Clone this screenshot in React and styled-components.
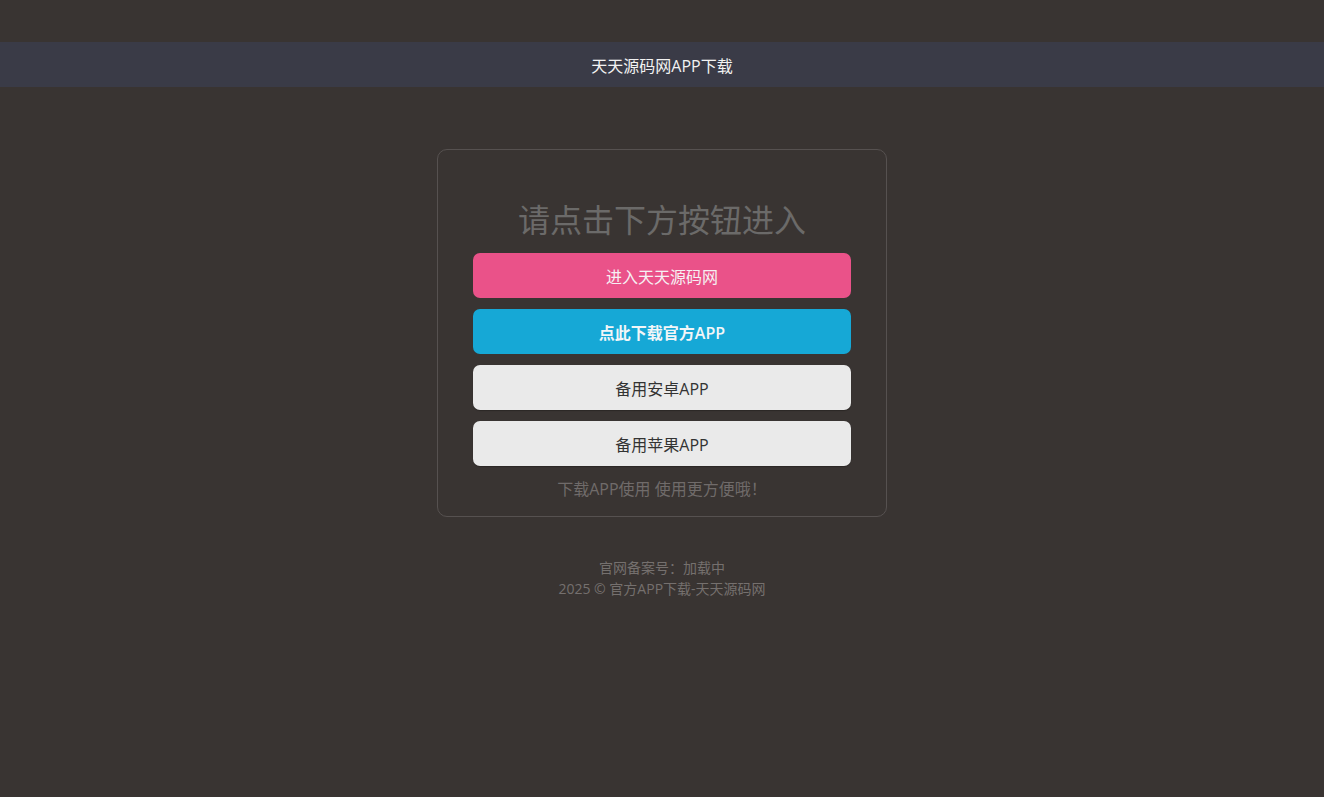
import React from 'react';
import styled, { createGlobalStyle } from 'styled-components';

const buttons = [
  { label: '进入天天源码网', kind: 'pink' },
  { label: '点此下载官方APP', kind: 'blue', bold: true },
  { label: '备用安卓APP', kind: 'plain' },
  { label: '备用苹果APP', kind: 'plain' },
];

const colors = {
  pink: { bg: '#ea5289', fg: '#f6f0f3' },
  blue: { bg: '#16a8d6', fg: '#f2f6f8' },
  plain: { bg: '#eaeaea', fg: '#333333' },
};

const App = () => {
  return (
    <>
      <GlobalStyle />
      <Page>
        <Header>天天源码网APP下载</Header>
        <Card>
          <Title>请点击下方按钮进入</Title>
          <Buttons>
            {buttons.map((b, i) => (
              <Button key={i} kind={b.kind} $bold={b.bold}>{b.label}</Button>
            ))}
          </Buttons>
          <Note>下载APP使用 使用更方便哦！</Note>
        </Card>
        <Footer>
          <FooterLine>官网备案号：加载中</FooterLine>
          <FooterLine>2025 © 官方APP下载-天天源码网</FooterLine>
        </Footer>
      </Page>
    </>
  );
};

export default App;

const GlobalStyle = createGlobalStyle`
  html, body {
    margin: 0;
    padding: 0;
    background: #393432;
  }
  body {
    font-family: "Open Sans", "Noto Sans CJK SC", sans-serif;
  }
`;

const Page = styled.div`
  min-height: 797px;
  padding-top: 42px;
  box-sizing: border-box;
  display: flex;
  flex-direction: column;
  align-items: center;
`;

const Header = styled.div`
  align-self: stretch;
  height: 45px;
  background: #3a3b47;
  color: #f2f2f2;
  font-size: 16px;
  display: flex;
  align-items: center;
  justify-content: center;
`;

const Card = styled.div`
  margin-top: 62px;
  width: 450px;
  height: 368px;
  box-sizing: border-box;
  border: 1px solid #565150;
  border-radius: 10px;
  padding: 46px 35px 0;
  display: flex;
  flex-direction: column;
  align-items: center;
`;

const Title = styled.h1`
  margin: 0;
  font-size: 32px;
  font-weight: normal;
  color: #6b6a69;
  line-height: 48px;
`;

const Buttons = styled.div`
  margin-top: 9px;
  align-self: stretch;
  display: flex;
  flex-direction: column;
  gap: 11px;
`;

const Button = styled.div`
  height: 45px;
  border-radius: 7px;
  background: ${(p) => colors[p.kind].bg};
  color: ${(p) => colors[p.kind].fg};
  font-size: 16px;
  font-weight: ${(p) => (p.$bold ? 600 : 400)};
  display: flex;
  align-items: center;
  justify-content: center;
  box-shadow: ${(p) => (p.kind === 'plain' ? '0 1px 1px rgba(0,0,0,0.25)' : 'none')};
  cursor: pointer;
`;

const Note = styled.div`
  margin-top: 12px;
  font-size: 16px;
  color: #706b6a;
  line-height: 22px;
`;

const Footer = styled.div`
  margin-top: 40px;
  display: flex;
  flex-direction: column;
  align-items: center;
`;

const FooterLine = styled.div`
  font-size: 14px;
  color: #75706e;
  line-height: 21px;
`;
